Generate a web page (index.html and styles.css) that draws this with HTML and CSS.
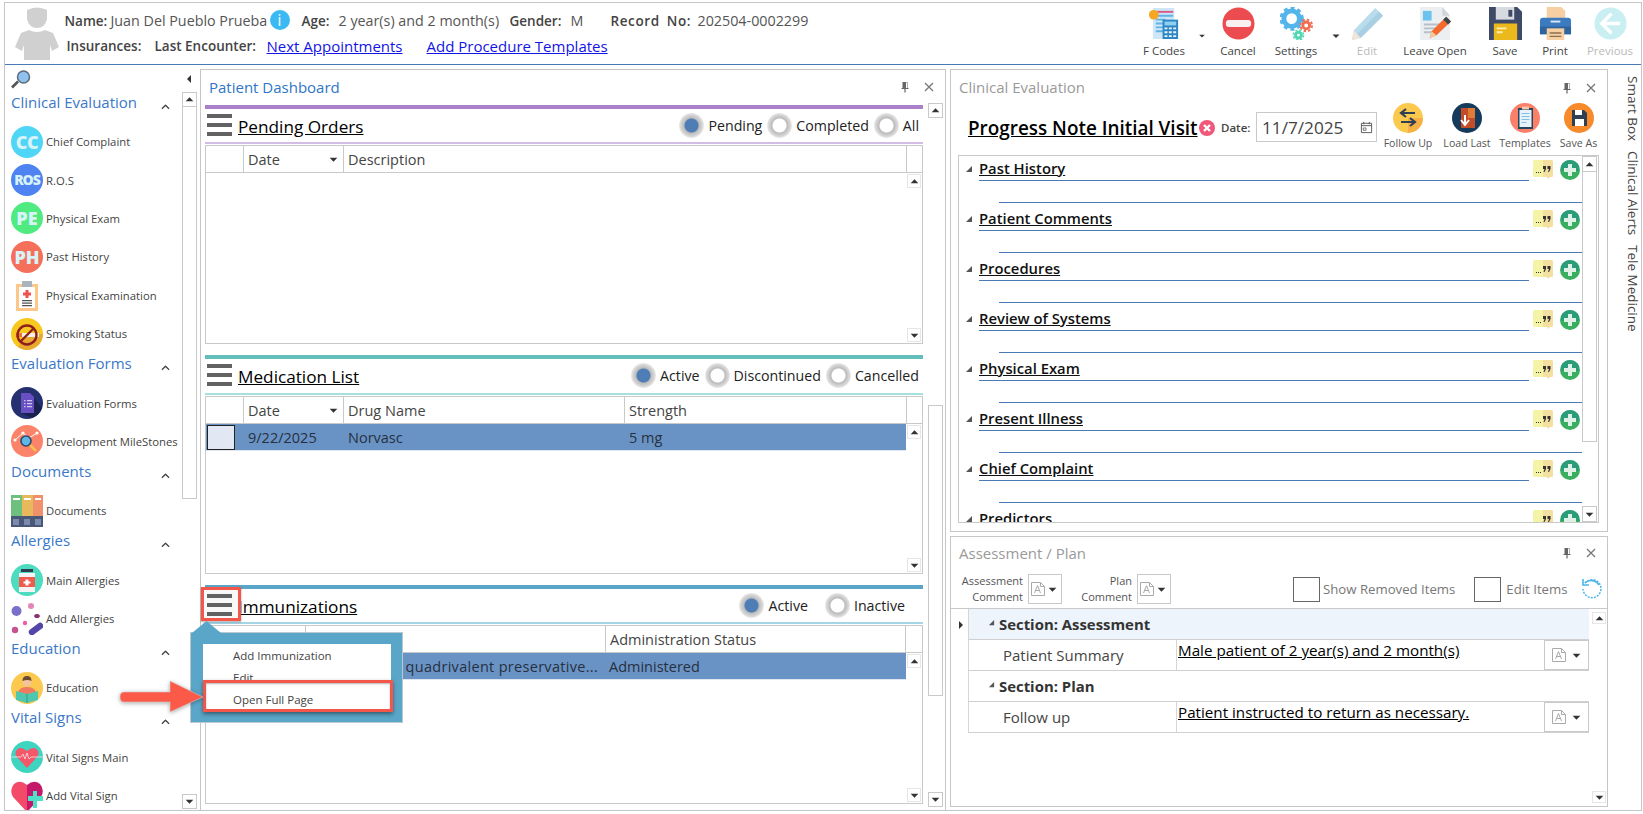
FILE: index.html
```html
<!DOCTYPE html>
<html lang="en">
<head>
<meta charset="utf-8">
<title>Encounter</title>
<link rel="stylesheet" href="styles.css">
</head>
<body>
<svg class="defs" aria-hidden="true">
  <symbol id="pin" viewBox="0 0 12 12"><path d="M3.500 1h5v6h1v1H6.600v3.500H5.400V8H2.500V7h1z" fill="#666"/><path d="M7 1.500h1v5.500H7z" fill="#fff"/></symbol>
  <symbol id="cross" viewBox="0 0 12 12"><path d="M2 2l8 8M10 2l-8 8" stroke="#777" stroke-width="1.300" fill="none"/></symbol>
  <symbol id="chev" viewBox="0 0 10 6"><path d="M1 5l4-4 4 4" stroke="#444" stroke-width="1.400" fill="none"/></symbol>
  <symbol id="up" viewBox="0 0 10 10"><path d="M1.500 6.500L5 3l3.500 3.500z" fill="#333"/></symbol>
  <symbol id="down" viewBox="0 0 10 10"><path d="M1.500 3.500L5 7l3.500-3.500z" fill="#333"/></symbol>
  <symbol id="tri" viewBox="0 0 8 8"><path d="M7 1v6H1z" fill="#555"/></symbol>
  <symbol id="note" viewBox="0 0 20 20"><path d="M0 1.500Q0 0 1.500 0H10v17H1.500Q0 17 0 15.500z" fill="#f5f3a6"/><path d="M10 0h8.500Q20 0 20 1.500v14q0 1.500-1.500 1.500H17l-2 2-1-2h-4z" fill="#f3dfa0"/><path d="M3 12h1v1H3zm2 0h1v1H5zm2 0h1v1H7zM10 6h3v3l-1.500 3h-1l1-3H10zm4.500 0h3v3L16 12h-1l1-3h-1.500z" fill="#333"/></symbol>
  <symbol id="plus" viewBox="0 0 20 20"><circle cx="10" cy="10" r="10" fill="#3aae5f"/><path d="M1 6a10 10 0 0 1 18 0c0 2 0 4-1 5H2C1 10 1 8 1 6z" fill="#2a9c7a"/><path d="M8 4h4v4h4v4h-4v4H8v-4H4V8h4z" fill="#dff0e6"/></symbol>
  <symbol id="adoc" viewBox="0 0 16 16"><path d="M1.500 1.500h9l4 4v9h-13z" fill="#fff" stroke="#aaa"/><path d="M10.500 1.500v4h4" fill="none" stroke="#aaa"/><path d="M4.500 12l3-7.500 3 7.500M5.700 9.500h3.600" stroke="#aaa" fill="none"/></symbol>
  <symbol id="menu" viewBox="0 0 25 22"><path d="M0 0h25v4H0zM0 9h25v4H0zM0 18h25v4H0z" fill="#626262"/></symbol>
</svg>

<div class="app">
  <div class="shell">
    <header class="hdr">
      <svg class="avatar" viewBox="0 0 44 54"><path d="M12 4q10-5 20 0v9q-2 9-10 9t-10-9z" fill="#d0d0d0"/><path d="M14 24q8 4 16 0l8 3 6 14-7 4-2-6v15H9V39l-2 6-7-4 6-14z" fill="#d0d0d0"/></svg>
      <div class="info">
        <div class="irow one">
          <b>Name:</b><span>Juan Del Pueblo Prueba</span><i class="infoi">i</i><b>Age:</b><span>2 year(s) and 2 month(s)</span><b>Gender:</b><span>M</span><b class="rec">Record No:</b><span>202504-0002299</span>
        </div>
        <div class="irow two">
          <b>Insurances:</b><b>Last Encounter:</b><a href="#">Next Appointments</a><a href="#">Add Procedure Templates</a>
        </div>
      </div>
      <nav class="tools">
        <div class="tool w68">
          <svg class="ticon" viewBox="0 0 34 34"><path d="M5 1h22v32H5z" fill="#cfe6f7"/><path d="M8 4h18v2H8z" fill="#d85a8a"/><path d="M8 8h18v2H8zM8 12h10v2H8zM8 16h10v2H8zM8 20h10v2H8zM8 24h10v2H8z" fill="#5fb3e6"/><path d="M15 13h16v20H15z" fill="#2e86c4"/><path d="M17 15h12v4H17z" fill="#8fd0f0"/><path d="M17 21h3v2h-3zm4.500 0h3v2h-3zm4.500 0h3v2h-3zM17 25h3v2h-3zm4.500 0h3v2h-3zm4.500 0h3v2h-3zM17 29h3v2h-3zm4.500 0h3v2h-3zm4.500 0h3v2h-3z" fill="#e8f5fc"/><circle cx="6" cy="8" r="5" fill="#f5a623"/></svg>
          <span>F Codes</span>
        </div>
        <svg class="tcaret" viewBox="0 0 10 10"><use href="#down"/></svg>
        <div class="tool w64">
          <svg class="ticon" viewBox="0 0 34 34"><circle cx="17" cy="17" r="16.500" fill="#ec4b50"/><rect x="4" y="13.500" width="26" height="7" rx="3" fill="#f8f0f0"/></svg>
          <span>Cancel</span>
        </div>
        <div class="tool w52">
          <svg class="ticon wide" viewBox="0 0 34 34"><circle cx="12" cy="12" r="8" fill="none" stroke="#53b5ea" stroke-width="5"/><circle cx="12" cy="12" r="11" fill="none" stroke="#53b5ea" stroke-width="3" stroke-dasharray="4 3.200"/><circle cx="27" cy="19" r="3.500" fill="none" stroke="#ef6d53" stroke-width="3"/><circle cx="27" cy="19" r="6" fill="none" stroke="#ef6d53" stroke-width="2" stroke-dasharray="2.500 2.200"/><circle cx="19" cy="29" r="3" fill="none" stroke="#4fd6b4" stroke-width="3"/><circle cx="19" cy="29" r="5.300" fill="none" stroke="#4fd6b4" stroke-width="1.500" stroke-dasharray="2.200 2"/></svg>
          <span>Settings</span>
        </div>
        <svg class="tcaret w28" viewBox="0 0 10 10"><use href="#down"/></svg>
        <div class="tool w34 dim">
          <svg class="ticon" viewBox="0 0 34 34"><path d="M25 1l8 8L10 32l-9 2 2-10z" fill="#b9dcec"/><path d="M29 5l4 4L10 32 6 28z" fill="#a8cfe2"/><path d="M3 24l7 8-9 2z" fill="#f1e4d9"/></svg>
          <span>Edit</span>
        </div>
        <div class="tool w102">
          <svg class="ticon" viewBox="0 0 34 34"><path d="M1 0h23l8 9v25H1z" fill="#eceff2"/><path d="M24 0l8 9h-8z" fill="#cfd5da"/><path d="M4 4h9v10H4z" fill="#6cc3ef"/><path d="M5 17h21v2H5zM5 21h15v2H5zM5 25h12v2H5z" fill="#b7c0c8"/><path d="M28 10l5 5-15 14-7 3 2-7z" fill="#f26a2e"/><path d="M28 10l5 5-3 3-5-5z" fill="#37474f"/><path d="M13 25l5 4-7 3z" fill="#f5c99a"/></svg>
          <span>Leave Open</span>
        </div>
        <div class="tool w38">
          <svg class="ticon" viewBox="0 0 34 34"><path d="M0 0h29l5 5v29H0z" fill="#3e4a68"/><path d="M7 0h19v13H7z" fill="#d7dbe0"/><path d="M20 3h4v7h-4z" fill="#3e4a68"/><path d="M5 17h24v17H5z" fill="#ecb91c"/><path d="M8 21h10v2H8zm0 4h6v2H8z" fill="#fbeeb8"/></svg>
          <span>Save</span>
        </div>
        <div class="tool w62">
          <svg class="ticon" viewBox="0 0 34 34"><path d="M8 0h15l4 4v10H8z" fill="#f6cfa3"/><path d="M1 14q0-3 3-3h26q3 0 3 3v14H1z" fill="#3c7bbf"/><path d="M1 20h32v8H1z" fill="#2f659f"/><path d="M12 14h10v2H12z" fill="#dbe7f3"/><path d="M8 22h18v12H8z" fill="#f6cfa3"/><path d="M11 26h12v1.500H11zM11 29.500h12V31H11z" fill="#8c7050"/></svg>
          <span>Print</span>
        </div>
        <div class="tool w48 dim">
          <svg class="ticon" viewBox="0 0 34 34"><circle cx="17" cy="17" r="16.500" fill="#c9eff2"/><path d="M18 7l-10 10 10 10M8 17h19" stroke="#fff" stroke-width="3.500" fill="none"/></svg>
          <span class="nowrap">Previous</span>
        </div>
      </nav>
    </header>

    <div class="main">
      <aside class="side">
        <div class="slist">
          <svg class="search" viewBox="0 0 20 20"><path d="M7 12l-6 6" stroke="#555" stroke-width="2.600"/><circle cx="12.500" cy="7.500" r="6" fill="#8fc2ef" stroke="#5e6b78" stroke-width="1.500"/></svg>
          <div class="shead"><h3>Clinical Evaluation</h3><svg viewBox="0 0 10 6"><use href="#chev"/></svg></div>
          <div class="sitem"><i class="disc cc">CC</i><span>Chief Complaint</span></div>
          <div class="sitem"><i class="disc ros">ROS</i><span>R.O.S</span></div>
          <div class="sitem"><i class="disc pe">PE</i><span>Physical Exam</span></div>
          <div class="sitem"><i class="disc ph">PH</i><span>Past History</span></div>
          <div class="sitem">
            <svg class="sicon" viewBox="0 0 32 32"><path d="M5 5h22v27H5z" fill="#fbc88a"/><path d="M8 8h16v21H8z" fill="#fff"/><path d="M11 2h10v6H11z" fill="#aab4bc"/><path d="M14.500 11h3v2.500H20v3h-2.500V19h-3v-2.500H12v-3h2.500z" fill="#ee5350"/><path d="M11 21h10v1.200H11zM11 23.500h10v1.200H11zM11 26h10v1.200H11z" fill="#555"/></svg>
            <span>Physical Examination</span>
          </div>
          <div class="sitem">
            <svg class="sicon" viewBox="0 0 32 32"><circle cx="16" cy="16" r="16" fill="#f8c81e"/><path d="M16 16l16 0a16 16 0 0 1-25 13z" fill="#e8a92f"/><path d="M5 15h23v4H5z" fill="#f4f1ea"/><path d="M5 15h6v4H5z" fill="#e9782e"/><circle cx="16" cy="17" r="9.500" fill="none" stroke="#8e1f1c" stroke-width="2.400"/><path d="M9 24L23 10" stroke="#8e1f1c" stroke-width="2.400"/></svg>
            <span>Smoking Status</span>
          </div>
          <div class="shead"><h3>Evaluation Forms</h3><svg viewBox="0 0 10 6"><use href="#chev"/></svg></div>
          <div class="sitem">
            <svg class="sicon" viewBox="0 0 32 32"><circle cx="16" cy="16" r="16" fill="#24306f"/><path d="M19 6l12 15a16 16 0 0 1-10 10L10 26z" fill="#1a2350"/><path d="M10 6h9l4 4v16H10z" fill="#6a4fc3"/><path d="M13 13h1.500v1.200H13zm3 0h5v1.200h-5zm-3 3h1.500v1.200H13zm3 0h5v1.200h-5zm-3 3h1.500v1.200H13zm3 0h5v1.200h-5z" fill="#cfc6ef"/></svg>
            <span>Evaluation Forms</span>
          </div>
          <div class="sitem">
            <svg class="sicon" viewBox="0 0 32 32"><circle cx="16" cy="16" r="16" fill="#fb8369"/><path d="M4 15l8-7 6 5 8-5" stroke="#fff" stroke-width="1" fill="none"/><circle cx="4" cy="15" r="1.600" fill="#fff"/><circle cx="12" cy="8" r="1.600" fill="#fff"/><circle cx="26" cy="8" r="1.600" fill="#fff"/><path d="M19 20l6 6" stroke="#f6c04d" stroke-width="2.600"/><circle cx="15" cy="16" r="5" fill="#5db7e8" stroke="#2d4a6a" stroke-width="1.600"/></svg>
            <span class="nowrap">Development MileStones</span>
          </div>
          <div class="shead"><h3>Documents</h3><svg viewBox="0 0 10 6"><use href="#chev"/></svg></div>
          <div class="sitem">
            <svg class="sicon" viewBox="0 0 32 32"><path d="M0 0h11v32H0z" fill="#6fc07f"/><path d="M11 0h11v32H11z" fill="#e7b95a"/><path d="M22 0h10v32H22z" fill="#f0916b"/><path d="M0 21h32v11H0z" fill="#4a5878"/><path d="M2 3h7v2H2zm11 0h7v2h-7zm11 0h6v2h-6z" fill="#fff"/><path d="M2 24h6v6H2zm11 0h6v6h-6zm11 0h6v6h-6z" fill="#7b8bb0"/></svg>
            <span>Documents</span>
          </div>
          <div class="shead"><h3>Allergies</h3><svg viewBox="0 0 10 6"><use href="#chev"/></svg></div>
          <div class="sitem">
            <svg class="sicon" viewBox="0 0 32 32"><circle cx="16" cy="16" r="16" fill="#4ddcc0"/><path d="M10 5h12v3H10z" fill="#2c3e50"/><path d="M8 9h16v19H8z" fill="#f4f4f4"/><path d="M8 13h16v10H8z" fill="#ef5b4c"/><path d="M14.500 15.500h3v2h2v2h-2v2h-3v-2h-2v-2h2z" fill="#fff"/></svg>
            <span>Main Allergies</span>
          </div>
          <div class="sitem">
            <svg class="sicon" viewBox="0 0 32 32"><circle cx="5.500" cy="8" r="5" fill="#7a6fc9"/><circle cx="20" cy="3" r="3" fill="#e386b6"/><ellipse cx="26" cy="13" rx="2.800" ry="2" fill="#8a2f70"/><circle cx="14" cy="20" r="2.200" fill="#ef5ba8"/><circle cx="4" cy="27" r="3.200" fill="#c45491"/><path d="M21 29l8-6" stroke="#5445a8" stroke-width="6.500" stroke-linecap="round"/></svg>
            <span>Add Allergies</span>
          </div>
          <div class="shead"><h3>Education</h3><svg viewBox="0 0 10 6"><use href="#chev"/></svg></div>
          <div class="sitem">
            <svg class="sicon" viewBox="0 0 32 32"><circle cx="16" cy="16" r="16" fill="#fac94e"/><path d="M7 20q2-5 9-5t9 5v6H7z" fill="#ef7a5f"/><circle cx="16" cy="10" r="4.500" fill="#f4c59c"/><path d="M11.500 9q0-5 4.500-5t4.500 5q-4-2-9 0z" fill="#6a4a32"/><path d="M5 19l11 3 11-3v9l-11 3-11-3z" fill="#4fc7ae"/><path d="M16 22v9" stroke="#2f9f8a"/></svg>
            <span>Education</span>
          </div>
          <div class="shead"><h3>Vital Signs</h3><svg viewBox="0 0 10 6"><use href="#chev"/></svg></div>
          <div class="sitem">
            <svg class="sicon" viewBox="0 0 32 32"><circle cx="16" cy="16" r="16" fill="#3fd4bf"/><path d="M16 27L6 16q-3-4 0-7.500 4-3.500 10 1.500 6-5 10-1.500 3 3.500 0 7.500z" fill="#f4566a"/><path d="M0 16h10l2-3 2 5 2-6 2 6 2-2h12" stroke="#f8e6e6" stroke-width=".8" fill="none"/></svg>
            <span>Vital Signs Main</span>
          </div>
          <div class="sitem">
            <svg class="sicon" viewBox="0 0 32 32"><path d="M16 32L2 17Q-2 10 3 4q6-5 13 1z" fill="#f24a68"/><path d="M16 32V5q7-6 13-1 5 6 1 13z" fill="#c4186a"/><path d="M17 16h5v-5h4v5h6v5h-6v7h-4v-7h-5z" fill="#4fe0c8"/></svg>
            <span>Add Vital Sign</span>
          </div>
        </div>
        <div class="srail">
          <svg class="collapse" viewBox="0 0 6 10"><path d="M5 1L1 5l4 4z" fill="#333"/></svg>
          <div class="sb sidebar-sb">
            <button class="sbtn"><svg viewBox="0 0 10 10"><use href="#up"/></svg></button>
            <div class="thumb t-side"></div>
            <button class="sbtn"><svg viewBox="0 0 10 10"><use href="#down"/></svg></button>
          </div>
        </div>
      </aside>

      <section class="panel center">
        <div class="ptitle">
          <h2 class="blue">Patient Dashboard</h2>
          <svg class="pico" viewBox="0 0 12 12"><use href="#pin"/></svg>
          <svg class="pico" viewBox="0 0 12 12"><use href="#cross"/></svg>
        </div>
        <div class="pbody">
          <div class="secs">
            <div class="sec purple">
              <div class="shd">
                <svg class="ham" viewBox="0 0 25 22"><use href="#menu"/></svg>
                <h4>Pending Orders</h4>
                <div class="radios">
                  <label class="rd on">Pending</label><label class="rd">Completed</label><label class="rd">All</label>
                </div>
              </div>
              <div class="tbl t1">
                <div class="thd c1"><div></div><div class="sortc">Date<svg viewBox="0 0 10 10"><use href="#down"/></svg></div><div>Description</div><div></div></div>
                <div class="tbd"><div class="rows"></div>
                  <div class="sb"><button class="sbtn"><svg viewBox="0 0 10 10"><use href="#up"/></svg></button><button class="sbtn"><svg viewBox="0 0 10 10"><use href="#down"/></svg></button></div>
                </div>
              </div>
            </div>
            <div class="sec teal">
              <div class="shd">
                <svg class="ham" viewBox="0 0 25 22"><use href="#menu"/></svg>
                <h4>Medication List</h4>
                <div class="radios">
                  <label class="rd on">Active</label><label class="rd">Discontinued</label><label class="rd">Cancelled</label>
                </div>
              </div>
              <div class="tbl t2">
                <div class="thd c2"><div></div><div class="sortc">Date<svg viewBox="0 0 10 10"><use href="#down"/></svg></div><div>Drug Name</div><div>Strength</div><div></div></div>
                <div class="tbd">
                  <div class="rows"><div class="trow c2r"><div class="cellbox"><i></i></div><div>9/22/2025</div><div>Norvasc</div><div>5 mg</div></div></div>
                  <div class="sb"><button class="sbtn"><svg viewBox="0 0 10 10"><use href="#up"/></svg></button><button class="sbtn"><svg viewBox="0 0 10 10"><use href="#down"/></svg></button></div>
                </div>
              </div>
            </div>
            <div class="sec sky third">
              <div class="shd">
                <div class="hamwrap"><svg class="ham" viewBox="0 0 25 22"><use href="#menu"/></svg></div>
                <h4>Immunizations</h4>
                <div class="radios wide">
                  <label class="rd on">Active</label><label class="rd">Inactive</label>
                </div>
              </div>
              <div class="tbl t3">
                <div class="thd c3"><div></div><div></div><div>Administration Status</div><div></div></div>
                <div class="tbd">
                  <div class="rows"><div class="trow c3r"><div></div><div class="rtext">quadrivalent preservative...</div><div>Administered</div></div></div>
                  <div class="sb"><button class="sbtn"><svg viewBox="0 0 10 10"><use href="#up"/></svg></button><button class="sbtn"><svg viewBox="0 0 10 10"><use href="#down"/></svg></button></div>
                </div>
              </div>
              <div class="popup">
                <ul class="pmenu">
                  <li>Add Immunization</li>
                  <li>Edit</li>
                  <li>Open Full Page</li>
                </ul>
                <div class="phl"></div>
              </div>
            </div>
          </div>
          <div class="sb outer">
            <button class="sbtn"><svg viewBox="0 0 10 10"><use href="#up"/></svg></button>
            <div class="thumb t-center"></div>
            <button class="sbtn"><svg viewBox="0 0 10 10"><use href="#down"/></svg></button>
          </div>
        </div>
      </section>

      <div class="rightcol">
        <section class="panel clinical">
          <div class="ptitle">
            <h2 class="gray">Clinical Evaluation</h2>
            <svg class="pico" viewBox="0 0 12 12"><use href="#pin"/></svg>
            <svg class="pico" viewBox="0 0 12 12"><use href="#cross"/></svg>
          </div>
          <div class="ce-bar">
            <h1>Progress Note Initial Visit</h1>
            <svg class="xred" viewBox="0 0 16 16"><circle cx="8" cy="8" r="8" fill="#f0587a"/><path d="M5 5l6 6M11 5l-6 6" stroke="#fff" stroke-width="2.400"/></svg>
            <b class="dlabel">Date:</b>
            <div class="datebox"><span>11/7/2025</span><svg viewBox="0 0 14 14"><path d="M1.500 2.500h11v10h-11zM1.500 5h11M4 1v2.500M10 1v2.500" fill="none" stroke="#555"/><path d="M3.500 7.500h3v2.500h-3z" fill="none" stroke="#555" stroke-width=".8"/></svg></div>
            <div class="mini m1">
              <svg viewBox="0 0 30 30"><circle cx="15" cy="15" r="15" fill="#fbc94e"/><path d="M15 15h15a15 15 0 0 1-15 15z" fill="#f4a742" opacity=".7"/><path d="M22 10H9m4-4l-5 4 5 4M8 19h13m-4-4l5 4-5 4" stroke="#2f4054" stroke-width="2.200" fill="none"/></svg>
              <span>Follow Up</span>
            </div>
            <div class="mini m2">
              <svg viewBox="0 0 30 30"><circle cx="15" cy="15" r="15" fill="#153a5b"/><path d="M9 5h14v20H9z" fill="#c24e27"/><path d="M16 5h7v10h-7z" fill="#df7a37"/><path d="M13 12v9m-4-4l4 5 4-5" stroke="#fff" stroke-width="2" fill="none"/></svg>
              <span>Load Last</span>
            </div>
            <div class="mini m3">
              <svg viewBox="0 0 30 30"><circle cx="15" cy="15" r="15" fill="#fb8069"/><path d="M8 5h15v21H8z" fill="#22485f"/><path d="M9.500 7h12v17h-12z" fill="#e8f2fa"/><path d="M11.500 10h8v1h-8zm0 3h8v1h-8zm0 3h8v1h-8zm0 3h5v1h-5z" fill="#80bfe8"/><path d="M12 3.500h7v3h-7z" fill="#f3c9a8"/></svg>
              <span>Templates</span>
            </div>
            <div class="mini m4">
              <svg viewBox="0 0 30 30"><circle cx="15" cy="15" r="15" fill="#f78a2a"/><path d="M8 7h12l3 3v13H8z" fill="#2f4054"/><path d="M11 7h7v5h-7z" fill="#fff"/><path d="M11 16h9v7h-9z" fill="#fff"/></svg>
              <span class="nowrap">Save As</span>
            </div>
          </div>
          <div class="ce-list">
            <div class="ce-rows">
              <div class="cr"><svg class="ctri" viewBox="0 0 8 8"><use href="#tri"/></svg><div class="chd"><u>Past History</u></div><div class="cic"><svg viewBox="0 0 20 20"><use href="#note"/></svg><svg viewBox="0 0 20 20"><use href="#plus"/></svg></div><div class="csub"></div></div>
              <div class="cr"><svg class="ctri" viewBox="0 0 8 8"><use href="#tri"/></svg><div class="chd"><u>Patient Comments</u></div><div class="cic"><svg viewBox="0 0 20 20"><use href="#note"/></svg><svg viewBox="0 0 20 20"><use href="#plus"/></svg></div><div class="csub"></div></div>
              <div class="cr"><svg class="ctri" viewBox="0 0 8 8"><use href="#tri"/></svg><div class="chd"><u>Procedures</u></div><div class="cic"><svg viewBox="0 0 20 20"><use href="#note"/></svg><svg viewBox="0 0 20 20"><use href="#plus"/></svg></div><div class="csub"></div></div>
              <div class="cr"><svg class="ctri" viewBox="0 0 8 8"><use href="#tri"/></svg><div class="chd"><u>Review of Systems</u></div><div class="cic"><svg viewBox="0 0 20 20"><use href="#note"/></svg><svg viewBox="0 0 20 20"><use href="#plus"/></svg></div><div class="csub"></div></div>
              <div class="cr"><svg class="ctri" viewBox="0 0 8 8"><use href="#tri"/></svg><div class="chd"><u>Physical Exam</u></div><div class="cic"><svg viewBox="0 0 20 20"><use href="#note"/></svg><svg viewBox="0 0 20 20"><use href="#plus"/></svg></div><div class="csub"></div></div>
              <div class="cr"><svg class="ctri" viewBox="0 0 8 8"><use href="#tri"/></svg><div class="chd"><u>Present Illness</u></div><div class="cic"><svg viewBox="0 0 20 20"><use href="#note"/></svg><svg viewBox="0 0 20 20"><use href="#plus"/></svg></div><div class="csub"></div></div>
              <div class="cr"><svg class="ctri" viewBox="0 0 8 8"><use href="#tri"/></svg><div class="chd"><u>Chief Complaint</u></div><div class="cic"><svg viewBox="0 0 20 20"><use href="#note"/></svg><svg viewBox="0 0 20 20"><use href="#plus"/></svg></div><div class="csub"></div></div>
              <div class="cr"><svg class="ctri" viewBox="0 0 8 8"><use href="#tri"/></svg><div class="chd"><u>Predictors</u></div><div class="cic"><svg viewBox="0 0 20 20"><use href="#note"/></svg><svg viewBox="0 0 20 20"><use href="#plus"/></svg></div><div class="csub"></div></div>
            </div>
            <div class="sb ce-sb">
              <button class="sbtn"><svg viewBox="0 0 10 10"><use href="#up"/></svg></button>
              <div class="thumb t-ce"></div>
              <button class="sbtn"><svg viewBox="0 0 10 10"><use href="#down"/></svg></button>
            </div>
          </div>
        </section>

        <section class="panel assess">
          <div class="ptitle small">
            <h2 class="gray">Assessment / Plan</h2>
            <svg class="pico" viewBox="0 0 12 12"><use href="#pin"/></svg>
            <svg class="pico" viewBox="0 0 12 12"><use href="#cross"/></svg>
          </div>
          <div class="ap-bar">
            <div class="cmt a"><span>Assessment<br>Comment</span><div class="adrop"><svg viewBox="0 0 16 16"><use href="#adoc"/></svg><svg class="dc" viewBox="0 0 10 10"><use href="#down"/></svg></div></div>
            <div class="cmt b"><span>Plan<br>Comment</span><div class="adrop"><svg viewBox="0 0 16 16"><use href="#adoc"/></svg><svg class="dc" viewBox="0 0 10 10"><use href="#down"/></svg></div></div>
            <div class="chk c1k"><i></i><span>Show Removed Items</span></div>
            <div class="chk c2k"><i></i><span>Edit Items</span></div>
            <svg class="refresh" viewBox="0 0 22 22"><path d="M5 5a9 9 0 1 1-2 6" fill="none" stroke="#4cb5ea" stroke-width="1.500" stroke-dasharray="2 1.200"/><path d="M5 5a9 9 0 0 1 14 2" fill="none" stroke="#4cb5ea" stroke-width="1.600"/><path d="M3 1v6h6" fill="none" stroke="#4cb5ea" stroke-width="1.600"/></svg>
          </div>
          <div class="ap-grid">
            <div class="ap-ind"><svg viewBox="0 0 6 10"><path d="M1 1l4 4-4 4z" fill="#333"/></svg></div>
            <div class="ap-rows">
              <div class="sect first"><svg viewBox="0 0 8 8"><use href="#tri"/></svg><b>Section: Assessment</b></div>
              <div class="aprow"><div class="aplabel">Patient Summary</div><div class="apval">Male patient of 2 year(s) and 2 month(s)</div><div class="adrop big"><svg viewBox="0 0 16 16"><use href="#adoc"/></svg><svg class="dc" viewBox="0 0 10 10"><use href="#down"/></svg></div></div>
              <div class="sect"><svg viewBox="0 0 8 8"><use href="#tri"/></svg><b>Section: Plan</b></div>
              <div class="aprow"><div class="aplabel">Follow up</div><div class="apval">Patient instructed to return as necessary.</div><div class="adrop big"><svg viewBox="0 0 16 16"><use href="#adoc"/></svg><svg class="dc" viewBox="0 0 10 10"><use href="#down"/></svg></div></div>
            </div>
            <div class="sb ap-sb"><button class="sbtn"><svg viewBox="0 0 10 10"><use href="#up"/></svg></button><button class="sbtn"><svg viewBox="0 0 10 10"><use href="#down"/></svg></button></div>
          </div>
        </section>
      </div>

      <div class="rail">
        <span>Smart Box</span>
        <span>Clinical Alerts</span>
        <span>Tele Medicine</span>
      </div>
    </div>
  </div>
  <svg class="redarrow" viewBox="0 0 88 38"><path d="M6 14H52V3L85 19 52 34V24H6q-4 0-4-5t4-5z" fill="#fb5a49" stroke="#d8d8d8" stroke-width=".5"/></svg>
</div>
</body>
</html>
```

FILE: styles.css
```css
* , *::before, *::after { box-sizing: border-box; }
html, body { margin: 0; padding: 0; background: #fff; }
body { font-family: "Open Sans", "Noto Sans", sans-serif; color: #333; overflow: hidden; }
.defs { width: 0; height: 0; display: block; overflow: hidden; }
h1, h2, h3, h4, ul { margin: 0; padding: 0; font-weight: 400; }
i { font-style: normal; }
.nowrap { white-space: nowrap; }

.app { position: relative; width: 1643px; height: 814px; padding: 2px 1px 3px 4px; }
.shell { height: 809px; border: 1px solid #c6c6c6; display: flex; flex-direction: column; }

/* header */
.hdr { height: 62px; flex: none; display: flex; border-bottom: 1px solid #4a7ab5; }
.avatar { width: 44px; height: 54px; margin: 3px 5.500px 0 10px; flex: none; }
.info { padding-top: 6px; font-size: 13.500px; }
.irow { display: grid; align-items: center; height: 24px; white-space: nowrap; }
.irow b { font-weight: 600; color: #444; }
.irow span { color: #555; font-size: 14.300px; }
.rec { letter-spacing: .6px; word-spacing: 3px; }
.one { grid-template-columns: 46px 158px 33px 37px 171px 61px 40px 87px auto; height: 23px; }
.two { grid-template-columns: 88px 112px 160px auto; margin: 2px 0 0 2px; }
.two a { color: #1414e6; font-size: 15px; }
.infoi { width: 20px; height: 20px; border-radius: 50%; background: #3bb9f2; color: #e8f8ff; font: 400 17px/20px "Open Sans", sans-serif; text-align: center; margin-left: 1px; margin-top: -2px; }

.tools { margin-left: auto; display: flex; padding-right: 7px; width: 511px; flex: none; }
.tool { display: flex; flex-direction: column; align-items: center; padding-top: 4px; font-size: 11.500px; color: #444; flex: none; }
.tool span { line-height: 18px; margin-top: 2px; }
.ticon { width: 33px; height: 33px; }
.dim { color: #bbb; }
.w68 { width: 68px; } .w64 { width: 64px; } .w52 { width: 52px; } .w34 { width: 34px; }
.w102 { width: 102px; } .w38 { width: 38px; } .w62 { width: 62px; } .w48 { width: 48px; }
.tcaret { width: 8px; height: 10px; margin-top: 28px; flex: none; }
.tcaret.w28 { width: 28px; }

/* layout */
.main { flex: 1; min-height: 0; display: flex; }
.side { width: 195px; flex: none; display: flex; height: 100%; overflow: hidden; }
.slist { width: 177px; flex: none; }
.search { display: block; width: 20px; height: 21px; margin: 4px 0 1.500px 6px; }
.shead { height: 31px; display: flex; justify-content: space-between; padding: 0 12.500px 0 6px; align-items: flex-start; }
.shead h3 { color: #3a78c8; font-size: 15px; line-height: 20px; white-space: nowrap; }
.shead svg { width: 9px; height: 6px; margin-top: 12px; }
.sitem { height: 38.400px; display: flex; align-items: center; font-size: 11.300px; white-space: nowrap; color: #444; padding-left: 6px; }
.sitem span { margin-left: 3px; }
.sicon { width: 32px; height: 32px; flex: none; }
.disc { width: 32px; height: 32px; border-radius: 50%; flex: none; color: #d8f3f8; font: 800 18px/32px "Open Sans", sans-serif; text-align: center; }
.cc { background: #4fd6f6; letter-spacing: -.5px; } .ros { background: #4f83f1; font-size: 14px; letter-spacing: -1px; } .pe { background: #4fea80; } .ph { background: #f5705a; }

.srail { width: 18px; flex: none; display: flex; flex-direction: column; }
.collapse { width: 6px; height: 10px; margin: 9px 0 8px 4px; flex: none; }
.sb { display: flex; flex-direction: column; justify-content: space-between; flex: none; }
.sidebar-sb { width: 15px; height: 717px; }
.sbtn { width: 15px; height: 15px; padding: 0; border: 1px solid #c9c9c9; background: #fff; display: block; flex: none; }
.sbtn svg { width: 11px; height: 11px; display: block; margin: auto; }
.thumb { border: 1px solid #c9c9c9; border-top: 0; flex: none; background: #fff; }
.t-side { height: 392px; margin-bottom: auto; }

.panel { border: 1px solid #c6c6c6; background: #fff; }
.center { width: 746px; margin-top: 4px; flex: none; border-bottom: 0; display: flex; flex-direction: column; }
.ptitle { display: flex; align-items: center; height: 33px; flex: none; padding: 1px 10px 0 8px; }
.ptitle h2 { flex: 1; font-size: 15px; }
.blue { color: #2f76c6; }
.gray { color: #9a9a9a; }
.pico { width: 12px; height: 12px; margin-left: 12px; flex: none; }

.pbody { display: flex; flex: 1; min-height: 0; }
.secs { width: 718px; margin-left: 4px; padding-top: 2px; flex: none; }
.sec { margin-bottom: 11px; position: relative; }
.purple { border-top: 4px solid #ab80c9; }
.teal { border-top: 4px solid #62bfbb; }
.sky { border-top: 4px solid #5aa6c8; }
.shd { height: 35px; display: flex; align-items: center; border-bottom: 2px solid; padding: 0 4px 2px 2px; }
.teal .shd { height: 36px; }
.purple .shd { border-color: #d3bde4; }
.teal .shd { border-color: #a6e0de; }
.sky .shd { border-color: #a5d6e8; }
.ham { width: 25px; height: 22px; flex: none; }
.shd h4 { font-size: 17.200px; color: #000; text-decoration: underline; margin: 3px 0 0 6px; white-space: nowrap; }
.radios { margin-left: auto; display: flex; font-size: 14.200px; color: #222; margin-top: 1px; }
.radios.wide { padding-right: 14px; }
.radios.wide .rd { margin-left: 17px; }
.rd { display: flex; align-items: center; gap: 4px; margin-left: 5px; white-space: nowrap; }
.rd::before { content: ""; width: 25px; height: 25px; border-radius: 50%; background: radial-gradient(circle, #fff 0 6.500px, #bbb 7.500px, #d4d4d4 10.500px, #eaeaea 12.500px); flex: none; }
.rd.on::before { background: radial-gradient(circle, #4f7db6 0 6.500px, #bbb 7.500px, #d4d4d4 10.500px, #eaeaea 12.500px); }

.tbl { margin-top: 1px; border: 1px solid #c9c9c9; display: flex; flex-direction: column; font-size: 14.500px; color: #444; }
.t1 { height: 199px; } .t2 { height: 178px; } .t3 { height: 179px; }
.thd { display: grid; height: 27px; flex: none; border-bottom: 1px solid #c9c9c9; align-items: stretch; }
.thd > div { border-right: 1px solid #c9c9c9; padding: 1px 0 0 4px; display: flex; align-items: center; white-space: nowrap; min-width: 0; }
.thd > div:last-child { border-right: 0; }
.c1 { grid-template-columns: 38px 100px 563px 1fr; }
.c2 { grid-template-columns: 38px 100px 281px 282px 1fr; }
.c3 { grid-template-columns: 100px 300px 300px 1fr; }
.sortc { justify-content: space-between; }
.sortc svg { width: 11px; height: 11px; margin-right: 4px; }
.tbd { flex: 1; min-height: 0; display: flex; }
.rows { width: 700px; flex: none; }
.tbd .sb { width: 14px; padding: 1px 0 1px 1px; }
.tbd .sbtn { width: 14px; height: 14px; border-color: #e6e6e6; }
.trow { display: grid; height: 27px; background: #6a93c5; align-items: center; border-bottom: 1px solid #dfe6ef; color: #26303e; white-space: nowrap; }
.c2r { grid-template-columns: 38px 100px 281px 1fr; }
.c2r > div { padding: 1px 0 0 4px; }
.c3r { grid-template-columns: 100px 300px 1fr; }
.c3r > div { padding: 1px 0 0 3px; overflow: hidden; }
.c3r .rtext { text-align: right; padding-right: 8px; letter-spacing: .3px; }
.cellbox { padding: 0 0 0 1px !important; }
.cellbox i { display: block; width: 28px; height: 25px; background: #e2e8f3; border: 1px solid #222; }

.hamwrap { position: relative; z-index: 2; width: 25px; height: 22px; flex: none; }
.hamwrap::before { content: ""; position: absolute; left: -6px; top: -7px; width: 40px; height: 34px; background: #f8f8f8; border: 3px solid #f4564a; box-shadow: 0 1px 2px rgba(0,0,0,.35); z-index: -1; }
.hamwrap .ham { display: block; }

.popup { position: absolute; left: -15px; top: 43px; width: 213px; height: 91px; background: #5aa6c8; border: 1px solid #bcc8cf; padding: 11px 0 0 12px; z-index: 3; }
.popup::before { content: ""; position: absolute; left: 1px; top: -12px; width: 29px; height: 12px; background: #5aa6c8; clip-path: polygon(0 100%, 50% 0, 100% 100%); }
.pmenu { list-style: none; width: 188px; height: 68px; background: #fff; font-size: 11.500px; color: #444; padding-left: 30px; overflow: hidden; }
.pmenu li { height: 22px; line-height: 23px; }
.phl { position: absolute; left: 12px; top: 47px; width: 190px; height: 32px; border: 3px solid #f4564a; box-shadow: 0 2px 4px rgba(0,0,0,.45), inset 0 1px 2px rgba(0,0,0,.3); }

.outer { width: 15px; margin-left: 5px; height: 704px; }
.t-center { height: 291px; margin: 287px 0 auto; border-top: 1px solid #c9c9c9; }

.rightcol { width: 658px; margin: 4px 0 0 4px; flex: none; display: flex; flex-direction: column; gap: 4px; }
.clinical { height: 463px; flex: none; }
.assess { height: 271px; flex: none; }
.rightcol .ptitle { padding-top: 0; }
.assess .ptitle h2, .assess .pico { margin-top: -1px; }
.clinical .ptitle .pico { margin-top: 2px; }

.ce-bar { display: flex; height: 52px; align-items: flex-start; padding-left: 17px; }
.ce-bar h1 { font-size: 18.900px; font-weight: 600; color: #000; text-decoration: underline; line-height: 28px; margin-top: 11px; white-space: nowrap; width: 231px; }
.xred { width: 16px; height: 16px; margin: 17px 0 0 0; flex: none; }
.dlabel { font-size: 11.500px; font-weight: 600; color: #444; margin: 17px 0 0 6px; width: 35px; }
.datebox { width: 121px; height: 30px; margin-top: 9px; border: 1px solid #c9c9c9; display: flex; align-items: center; justify-content: space-between; padding: 1px 3px 0 5px; font-size: 17.200px; color: #444; flex: none; }
.datebox svg { width: 13px; height: 13px; }
.mini { display: flex; flex-direction: column; align-items: center; font-size: 10.600px; color: #555; flex: none; }
.mini svg { width: 30px; height: 30px; }
.mini span { line-height: 16px; margin-top: 2px; white-space: nowrap; }
.m1 { width: 60px; margin-left: 1px; } .m2 { width: 58px; } .m3 { width: 58px; } .m4 { width: 49px; }

.ce-list { margin: 0 8px 0 7px; height: 368px; border: 1px solid #c9c9c9; display: flex; overflow: hidden; }
.ce-rows { width: 623px; flex: none; height: 366px; overflow: hidden; }
.cr { display: grid; grid-template-columns: 20px 550px 1fr; grid-template-rows: 25px 22px; height: 50px; align-items: center; }
.ctri { width: 8px; height: 8px; margin-left: 6px; }
.chd { height: 25px; border-bottom: 1px solid #4a7ab5; font-size: 14.800px; font-weight: 600; color: #111; line-height: 25px; white-space: nowrap; }
.cic { display: flex; padding: 4px 0 0 4px; gap: 7px; height: 25px; align-items: flex-start; }
.cic svg { width: 20px; height: 20px; flex: none; }
.csub { grid-column: 2 / 4; margin-left: 20px; height: 22px; align-self: start; border-bottom: 1px solid #4a7ab5; }
.ce-sb { width: 15px; height: 366px; }
.ce-sb .sbtn { height: 16px; }
.t-ce { height: 270px; margin-bottom: auto; }

.ap-bar { height: 38px; display: flex; align-items: center; }
.cmt { display: flex; align-items: center; }
.cmt span { font-size: 11px; line-height: 16px; text-align: right; color: #555; }
.cmt.a span { width: 72px; }
.cmt.b span { width: 64px; }
.cmt.b { margin-left: 6px; }
.adrop { width: 34px; height: 30px; margin-left: 5px; border: 1px solid #c9c9c9; display: flex; align-items: center; justify-content: space-between; padding: 0 3px 0 1px; flex: none; background: #fff; }
.adrop svg { width: 16px; height: 16px; }
.adrop .dc { width: 11px; height: 11px; }
.chk { display: flex; align-items: center; font-size: 13.200px; color: #777; }
.chk i { width: 27px; height: 25px; border: 1px solid #666; margin-right: 3px; flex: none; }
.c1k { margin-left: 122px; }
.c2k { margin-left: 19px; }
.chk.c2k i { margin-right: 5px; }
.refresh { width: 22px; height: 22px; margin-left: 12px; }

.ap-grid { display: flex; height: 198px; border-top: 1px solid #c9c9c9; }
.ap-ind { width: 17px; flex: none; padding: 11px 0 0 7px; }
.ap-ind svg { width: 6px; height: 10px; display: block; }
.ap-rows { width: 621px; flex: none; }
.sect { height: 31px; display: flex; align-items: center; padding-left: 19px; border-bottom: 1px solid #d0d0d0; border-left: 1px solid #d6d6d6; font-size: 14.900px; color: #333; }
.sect.first { background: #eef4fb; }
.sect svg { width: 7px; height: 7px; margin: -3px 4px 0 0; flex: none; }
.sect b { font-weight: 700; }
.aprow { height: 31px; display: grid; grid-template-columns: 208px 1fr 45px; border-bottom: 1px solid #d0d0d0; border-left: 1px solid #d6d6d6; font-size: 15px; }
.aplabel { padding: 0 0 0 34px; border-right: 1px solid #d6d6d6; line-height: 30px; color: #444; }
.apval { text-decoration: underline; color: #000; line-height: 20px; padding-left: 1px; white-space: nowrap; font-size: 15.200px; }
.adrop.big { width: 45px; height: 30px; margin: 0; padding: 0 6px; }
.ap-sb { width: 14px; margin-left: 3px; padding: 3px 0; height: 197px; }
.ap-sb .sbtn { width: 14px; height: 12px; border-color: #e6e6e6; }

.rail { flex: 1; padding: 11px 0 0 0; display: flex; flex-direction: column; gap: 10px; font-size: 13.500px; color: #444; }
.rail span { writing-mode: vertical-rl; white-space: nowrap; line-height: 16px; margin-left: 9px; }

.redarrow { position: absolute; left: 118px; top: 678px; width: 88px; height: 38px; z-index: 5; filter: drop-shadow(0 1px 2px rgba(0,0,0,.35)); }
```
